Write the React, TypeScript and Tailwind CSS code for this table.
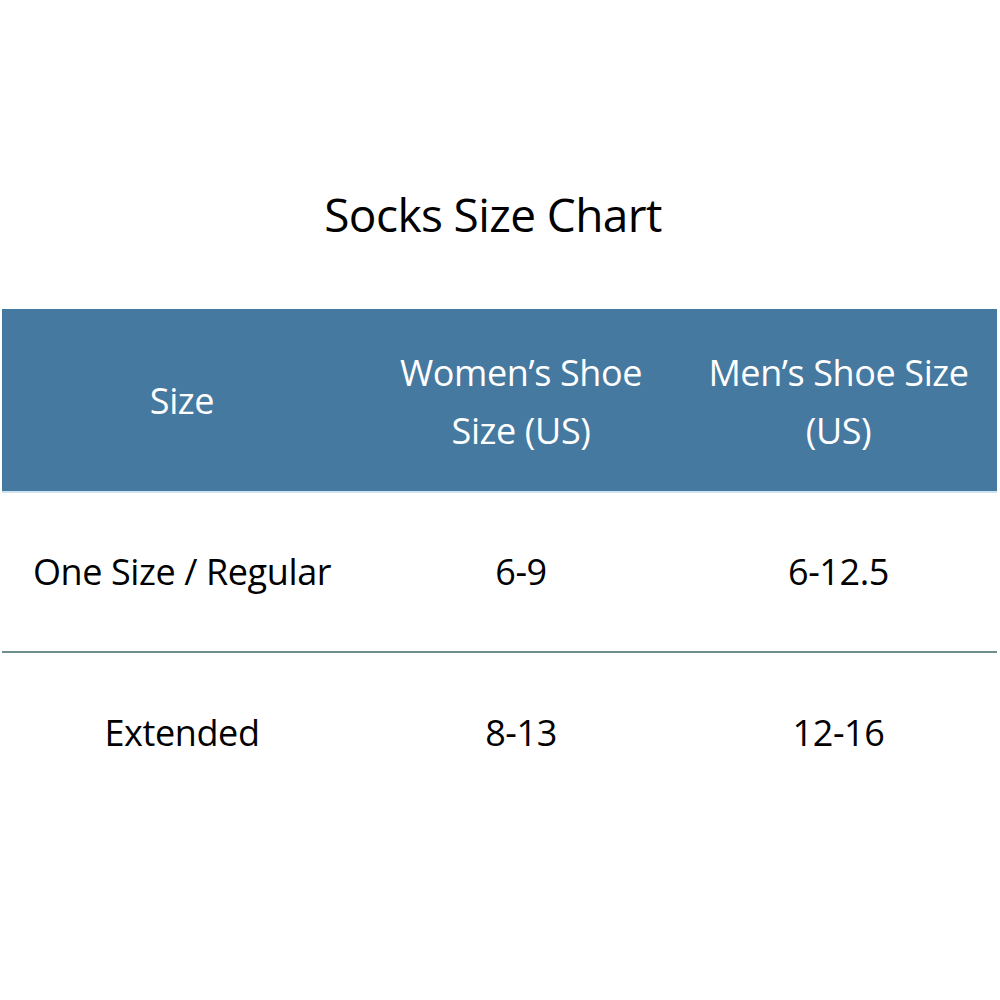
import React from "react";

export default function App() {
  const font = { fontFamily: '"Open Sans", "Liberation Sans", sans-serif' };
  return (
    <div className="w-[1000px] h-[1000px] bg-white flex flex-col" style={font}>
      <div className="h-[309px] flex items-start justify-center pt-[182px]">
        <h1 className="text-[46px] leading-[64px] text-black font-normal tracking-[-0.6px] pr-[14px]">Socks Size Chart</h1>
      </div>
      <div className="mx-[2px] w-[995px]">
        <div className="grid grid-cols-[360px_318px_317px] h-[184px] bg-[#46799f] text-white text-[36px] leading-[58px] tracking-[-0.4px] border-b-2 border-[#cfe2f0]">
          <div className="flex items-center justify-center text-center pt-[2px]">Size</div>
          <div className="flex items-center justify-center text-center pt-[4px]">Women’s Shoe<br />Size (US)</div>
          <div className="flex items-center justify-center text-center pt-[4px]">Men’s Shoe Size<br />(US)</div>
        </div>
        <div className="grid grid-cols-[360px_318px_317px] h-[160px] text-black text-[36px] tracking-[-0.4px] border-b-2 border-[#6f8f8f]">
          <div className="flex items-center justify-center">One Size / Regular</div>
          <div className="flex items-center justify-center">6-9</div>
          <div className="flex items-center justify-center">6-12.5</div>
        </div>
        <div className="grid grid-cols-[360px_318px_317px] h-[160px] text-black text-[36px] tracking-[-0.4px]">
          <div className="flex items-center justify-center">Extended</div>
          <div className="flex items-center justify-center">8-13</div>
          <div className="flex items-center justify-center">12-16</div>
        </div>
      </div>
    </div>
  );
}
